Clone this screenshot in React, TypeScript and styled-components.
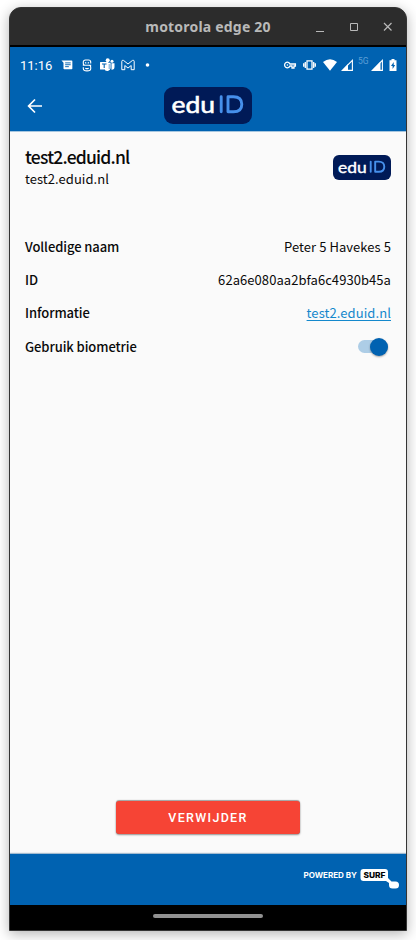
import React from "react";
import styled, { createGlobalStyle } from "styled-components";

const BLUE = "#0062b1";
const NAVY = "#001a57";
const SOURCE = '"Noto Sans CJK SC", "Noto Sans", sans-serif';

const GlobalStyle = createGlobalStyle`
  *, *::before, *::after { box-sizing: border-box; }
  html, body { margin: 0; padding: 0; background: #fff; overflow: hidden; }
  h1, p, dl, dt, dd { margin: 0; font: inherit; }
  button { border: 0; padding: 0; background: none; font: inherit; color: inherit; }
  svg { display: block; flex: none; overflow: visible; }
`;

const Desktop = styled.div`
  width: 416px;
  height: 940px;
  padding: 7px 9px 9px;
  background: #fff;
`;

const PhoneWindow = styled.section`
  display: flex;
  flex-direction: column;
  width: 398px;
  height: 924px;
  border: 1px solid #343434;
  border-radius: 12px 12px 0 0;
  background: #2c2c2c;
  overflow: hidden;
  box-shadow: 0 3px 13px rgba(0, 0, 0, 0.3);
`;

const TitleBar = styled.header`
  display: grid;
  grid-template-columns: 86px 1fr 86px;
  align-items: center;
  height: 39px;
  padding-bottom: 1px;
  border-bottom: 2px solid #000;
  color: #b9b9b9;
`;

const WindowTitle = styled.h1`
  grid-column: 2;
  text-align: center;
  white-space: nowrap;
  font: 700 14px/20px "Noto Sans", sans-serif;
  letter-spacing: 0.2px;
  padding-top: 1px;
`;

const WindowControls = styled.div`
  display: flex;
  justify-content: flex-end;
  gap: 23px;
  padding-right: 13px;
`;

const StatusBar = styled.div`
  display: flex;
  align-items: center;
  justify-content: space-between;
  height: 36px;
  padding: 0 9px 0 10px;
  background: ${BLUE};
  color: #fff;
`;

const StatusGroup = styled.div`
  display: flex;
  align-items: center;
`;

const IconCell = styled.span<{ $before: number }>`
  display: flex;
  margin-left: ${(p) => p.$before}px;
`;

const Clock = styled.time`
  width: 33px;
  margin-right: 8px;
  padding-top: 1px;
  font: 400 13px/16px Roboto, sans-serif;
`;

const NavBar = styled.nav`
  display: grid;
  grid-template-columns: 1fr auto 1fr;
  align-items: center;
  height: 48px;
  padding: 0 17px 3px;
  background: ${BLUE};
  color: #fff;
`;

const Content = styled.main`
  display: flex;
  flex: 1;
  flex-direction: column;
  padding: 14px 15px 20px;
  border-top: 1px solid #a6c6df;
  background: #fafafa;
  color: #0a0a0a;
  font-family: ${SOURCE};
`;

const Provider = styled.div`
  display: flex;
  justify-content: space-between;
  height: 84px;
`;

const ProviderName = styled.h1`
  padding-bottom: 1px;
  font-size: 17.5px;
  font-weight: 500;
  line-height: 22px;
  letter-spacing: -0.8px;
`;

const ProviderHost = styled.p`
  font-size: 13px;
  line-height: 20px;
  letter-spacing: 0.05px;
`;

const LogoSlot = styled.div`
  padding-top: 9px;
`;

const Details = styled.dl`
  display: flex;
  flex-direction: column;
`;

const DetailRow = styled.div`
  display: flex;
  align-items: center;
  justify-content: space-between;
  height: 33.4px;
  font-size: 13px;
  line-height: 20px;
`;

const Label = styled.dt`
  font-weight: 500;
  letter-spacing: -0.08px;
`;

const Value = styled.dd`
  display: flex;
  letter-spacing: 0.06px;
`;

const InfoLink = styled.a`
  color: #1488cc;
  letter-spacing: 0.08px;
  text-decoration: underline;
  text-decoration-thickness: 1px;
  text-underline-offset: 2px;
`;

const Track = styled.button`
  display: flex;
  align-items: center;
  justify-content: flex-end;
  width: 30px;
  height: 13px;
  margin-right: 3px;
  border-radius: 7px;
  background: #adcde6;
`;

const Thumb = styled.span`
  flex: none;
  width: 18px;
  height: 18px;
  border-radius: 50%;
  background: ${BLUE};
  box-shadow: 0 1px 2px rgba(0, 0, 0, 0.35);
`;

const DeleteButton = styled.button`
  align-self: center;
  width: 184px;
  height: 33px;
  margin: auto 0 0;
  border-radius: 3px;
  background: #f64435;
  color: #fff;
  font: 500 12.5px/33px Roboto, sans-serif;
  letter-spacing: 1.3px;
  box-shadow: 0 1px 2px rgba(0, 0, 0, 0.4), 0 -0.5px 1px rgba(0, 0, 0, 0.35);
`;

const Footer = styled.footer`
  display: flex;
  justify-content: flex-end;
  height: 51px;
  padding: 14px 7px 0 0;
  background: ${BLUE};
  box-shadow: 0 -1px 1px rgba(0, 70, 130, 0.35);
`;

const GestureBar = styled.div`
  display: flex;
  justify-content: center;
  height: 25px;
  padding-top: 9px;
  background: #000;
`;

const GestureHandle = styled.span`
  width: 110px;
  height: 4px;
  border-radius: 2px;
  background: #919191;
`;

function EduIdLogo({ width, height }: { width: number; height: number }) {
  return (
    <svg width={width} height={height} viewBox="0 0 88 37" preserveAspectRatio="none" role="img" aria-label="eduID">
      <rect width="88" height="37" rx="9" fill={NAVY} />
      <text x="7.500" y="26.300" fontFamily="Lato, sans-serif" fontSize="24" fontWeight="400" fill="#fff" stroke="#fff" strokeWidth=".6" textLength="43.500" lengthAdjust="spacingAndGlyphs">edu</text>
      <path d="M57.200 9.800V24.800M64 9.800V24.800H69.500Q77.800 24.800 77.800 17.300T69.500 9.800Z" fill="none" stroke="#4690eb" strokeWidth="2.900" strokeLinecap="round" strokeLinejoin="round" />
    </svg>
  );
}

const BackIcon = () => (
  <svg width="16" height="16" viewBox="0 0 16 16" fill="none" stroke="currentColor" strokeWidth="1.7">
    <path d="M15 8H2M8 1.5 1.6 8 8 14.5" />
  </svg>
);

function WindowIcons() {
  return (
    <WindowControls>
      <svg width="11" height="11" stroke="currentColor" fill="none"><path d="M2 10.5h8" /></svg>
      <svg width="11" height="11" stroke="currentColor" fill="none"><path d="M2.500 2.500h7v7h-7z" /></svg>
      <svg width="11" height="11" stroke="currentColor" fill="none"><path d="m2 2 7.5 7.5M9.500 2 2 9.500" strokeWidth="1.2" /></svg>
    </WindowControls>
  );
}

const MessageIcon = () => (
  <svg width="12" height="12" viewBox="0 1 13 12">
    <path d="M.5 2h11a.8.8 0 0 1 .8.8v8a.8.8 0 0 1-.8.8h-8a.8.8 0 0 1-.8-.8V4.500Z" fill="#fff" />
    <path d="M4.500 4.700h6M4.500 6.700h6M4.500 8.800h4" stroke={BLUE} />
  </svg>
);

const MaskIcon = () => (
  <svg width="10" height="13" viewBox="0 0 10 13" fill="none" stroke="#fff" strokeWidth="1.1">
    <path d="M8.700 4.500V3Q8.700 1 6.500 1H3.500Q1.300 1 1.300 3V4.500Q1.300 6.300 3.500 6.300H6.700Q8.700 6.300 8.700 8.200V9.700Q8.700 11.900 5 11.900T1.300 9.500V8.300M.8 6.300H9.200M3 3.500l1.300.7M7 3.500l-1.300.7M3.300 9.200Q5 10.100 6.700 9.200" />
  </svg>
);

const TeamsIcon = () => (
  <svg width="15" height="14" viewBox="0 0 15 14">
    <circle cx="7.700" cy="2.200" r="2" fill="#fff" />
    <circle cx="12" cy="3.200" r="1.500" fill="#fff" />
    <path d="M5 4.800h5.600v5.500a3.500 3.500 0 0 1-5.600 2ZM11.500 5.300h3V9a2.800 2.800 0 0 1-3 2.700Z" fill="#fff" />
    <rect y="4" width="8.300" height="7.500" rx=".6" fill="#fff" />
    <path d="M2 6h4.500M4.200 6v4" stroke={BLUE} strokeWidth="1.100" />
    <path d="M9.200 6v5" stroke={BLUE} strokeWidth=".6" />
  </svg>
);

const MailIcon = () => (
  <svg width="14" height="12" viewBox="0 0 14 12" fill="none" stroke="#fff" strokeWidth="1">
    <path d="M.8 10.700V2.300Q1 .8 2.500 1.400L7 5l4.500-3.600Q13 .8 13.200 2.300v8.400h-3V6.500L7 9 3.800 6.500v4.200Z" />
  </svg>
);

const NotificationDot = () => (
  <svg width="4" height="4"><circle cx="1.500" cy="2" r="1.800" fill="#fff" /></svg>
);

const KeyIcon = () => (
  <svg width="12" height="8" viewBox="0 0 12 8" fill="none" stroke="#fff" strokeWidth="1.300">
    <path d="M6 3A2.800 2.800 0 1 0 6 5H8V7H10V5H11.400V3Z" />
    <circle cx="3.400" cy="4" r=".8" fill="#fff" stroke="none" />
  </svg>
);

const VibrateIcon = () => (
  <svg width="13" height="10" viewBox="0 0 13 10" fill="none" stroke="#fff" strokeWidth="1.300">
    <path d="M4 .8h5v8.400H4zM2.300 2v6M10.700 2v6M.7 3.300v3.400M12.300 3.300v3.400" />
  </svg>
);

const WifiIcon = () => (
  <svg width="14" height="12" viewBox="0 0 14 12"><path d="M0 3Q7-2.600 14 3L7 11.800Z" fill="#fff" /></svg>
);

const SignalIcon = ({ level }: { level: number }) => (
  <svg width="12" height="12" viewBox="0 0 12 12" fill="#fff">
    <path d="M1.400 11.400 11.400 1.400V11.400Z" fill="none" stroke="#fff" strokeWidth="1.100" />
    <path d={`M.5 12 ${level} ${12 - level}V12Z`} />
  </svg>
);

const NetworkLabel = styled.span`
  align-self: flex-start;
  width: 11px;
  margin: -2px 2px 0 5px;
  color: #5c9fd6;
  font: 400 8.5px/9px Roboto, sans-serif;
`;

const BatteryIcon = () => (
  <svg width="8" height="12" viewBox="0 0 8 12">
    <path d="M2.500 0h3v1.200H7.500V12H.5V1.200h2Z" fill="#fff" />
    <path d="M4.700 3 2 7h1.600v3L6.200 6H4.700Z" fill={BLUE} />
  </svg>
);

const SurfBadge = () => (
  <svg width="96" height="22" viewBox="0 0 96 22" role="img" aria-label="Powered by SURF">
    <text x="0.500" y="10.200" fontFamily="Inter, sans-serif" fontSize="7.400" fontWeight="700" fill="#fff" textLength="53.500" lengthAdjust="spacingAndGlyphs">POWERED BY</text>
    <path d="M60.500 1H82Q85 1 85 4V10L88.500 13.500H92.500Q96 13.500 96 17T92.500 20.500H89.500Q86 20.500 86 17V15L83 13H60.500Q57.500 13 57.500 10V4Q57.500 1 60.500 1Z" fill="#fff" />
    <text x="60.500" y="10.200" fontFamily="Inter, sans-serif" fontSize="7.800" fontWeight="800" fill="#000" textLength="22" lengthAdjust="spacingAndGlyphs">SURF</text>
  </svg>
);

const details = [
  { label: "Volledige naam", value: "Peter 5 Havekes 5" },
  { label: "ID", value: "62a6e080aa2bfa6c4930b45a" },
  { label: "Informatie", value: <InfoLink>test2.eduid.nl</InfoLink> },
  { label: "Gebruik biometrie", value: <Track role="switch" aria-checked="true" aria-label="Gebruik biometrie"><Thumb /></Track> },
];

export default function App() {
  return (
    <Desktop>
      <GlobalStyle />
      <PhoneWindow>
        <TitleBar>
          <WindowTitle>motorola edge 20</WindowTitle>
          <WindowIcons />
        </TitleBar>
        <StatusBar>
          <StatusGroup>
            <Clock>11:16</Clock>
            <IconCell $before={0}><MessageIcon /></IconCell>
            <IconCell $before={9}><MaskIcon /></IconCell>
            <IconCell $before={8}><TeamsIcon /></IconCell>
            <IconCell $before={6}><MailIcon /></IconCell>
            <IconCell $before={11}><NotificationDot /></IconCell>
          </StatusGroup>
          <StatusGroup>
            <KeyIcon />
            <IconCell $before={7}><VibrateIcon /></IconCell>
            <IconCell $before={7}><WifiIcon /></IconCell>
            <IconCell $before={4}><SignalIcon level={7} /></IconCell>
            <NetworkLabel>5G</NetworkLabel>
            <SignalIcon level={9.5} />
            <IconCell $before={6}><BatteryIcon /></IconCell>
          </StatusGroup>
        </StatusBar>
        <NavBar>
          <BackIcon />
          <EduIdLogo width={88} height={37} />
        </NavBar>
        <Content>
          <Provider>
            <div>
              <ProviderName>test2.eduid.nl</ProviderName>
              <ProviderHost>test2.eduid.nl</ProviderHost>
            </div>
            <LogoSlot><EduIdLogo width={58} height={25} /></LogoSlot>
          </Provider>
          <Details>
            {details.map((row) => (
              <DetailRow key={row.label}>
                <Label>{row.label}</Label>
                <Value>{row.value}</Value>
              </DetailRow>
            ))}
          </Details>
          <DeleteButton>VERWIJDER</DeleteButton>
        </Content>
        <Footer><SurfBadge /></Footer>
        <GestureBar><GestureHandle /></GestureBar>
      </PhoneWindow>
    </Desktop>
  );
}
